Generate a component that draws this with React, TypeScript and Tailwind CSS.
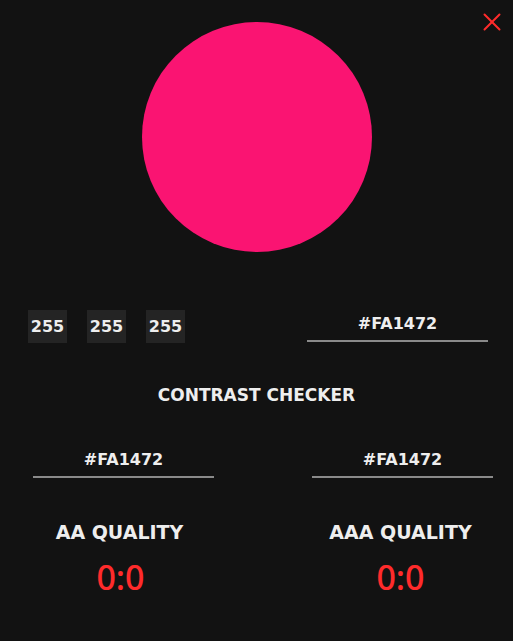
import { X } from "lucide-react";

const comic = { fontFamily: '"Comic Sans MS", "DejaVu Sans", sans-serif' };

const HexInput = ({ value }: { value: string }) => (
	<div className="w-[181px] border-b-2 border-[#8a8a8a] pb-[4px] text-center text-[16px] font-bold leading-[24px] text-[#eeeeee]">
		{value}
	</div>
);

const App = () => {
	return (
		<div
			className="relative min-h-screen w-full bg-[#121212] text-[#eeeeee]"
			style={comic}
		>
			<button className="absolute right-[6px] top-[7px] text-[#ff2b2b]">
				<X size={30} strokeWidth={1.6} />
			</button>

			<div className="flex justify-center pt-[22px]">
				<div className="h-[230px] w-[230px] rounded-full bg-[#fa1472]" />
			</div>

			<div className="mt-[58px] flex items-center pl-[28px]">
				<div className="flex gap-[20px]">
					{[255, 255, 255].map((v, i) => (
						<div
							key={i}
							className="flex h-[33px] w-[39px] items-center justify-center bg-[#242424] text-[16px] font-bold"
						>
							{v}
						</div>
					))}
				</div>
				<div className="ml-[122px]">
					<HexInput value="#FA1472" />
				</div>
			</div>

			<div className="mt-[40px] text-center text-[17px] font-bold">
				CONTRAST CHECKER
			</div>

			<div className="mt-[39px] flex pl-[33px]">
				<div className="flex w-[181px] flex-col items-center">
					<HexInput value="#FA1472" />
					<div className="mt-[40px] mr-[8px] text-[19px] font-bold">AA QUALITY</div>
					<div
						className="mt-[6px] mr-[6px] text-[34px] font-medium text-[#ff2b2b]"
						style={{ fontFamily: '"Noto Sans", sans-serif' }}
					>
						0:0
					</div>
				</div>
				<div className="ml-[98px] flex w-[181px] flex-col items-center">
					<HexInput value="#FA1472" />
					<div className="mt-[40px] mr-[4px] text-[19px] font-bold">AAA QUALITY</div>
					<div
						className="mt-[6px] mr-[4px] text-[34px] font-medium text-[#ff2b2b]"
						style={{ fontFamily: '"Noto Sans", sans-serif' }}
					>
						0:0
					</div>
				</div>
			</div>
		</div>
	);
};

export default App;
